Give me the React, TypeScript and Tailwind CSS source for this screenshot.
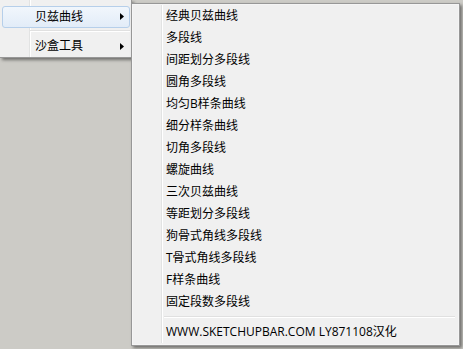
import type { ReactNode } from "react";

const SUB_ITEMS = [
  "经典贝兹曲线",
  "多段线",
  "间距划分多段线",
  "圆角多段线",
  "均匀B样条曲线",
  "细分样条曲线",
  "切角多段线",
  "螺旋曲线",
  "三次贝兹曲线",
  "等距划分多段线",
  "狗骨式角线多段线",
  "T骨式角线多段线",
  "F样条曲线",
  "固定段数多段线",
];

const FONT = { fontFamily: '"Open Sans", "Noto Sans CJK SC", sans-serif' };

function Arrow() {
  return (
    <svg width="4" height="7" viewBox="0 0 4 7" className="shrink-0">
      <polygon points="0,0 4,3.5 0,7" fill="#000" />
    </svg>
  );
}

function Separator({ className = "" }: { className?: string }) {
  return (
    <div className={`flex h-[8px] flex-col justify-center ${className}`}>
      <div className="h-px bg-[#e0e0e0]" />
      <div className="h-px bg-white" />
    </div>
  );
}

function Gutter({ w }: { w: string }) {
  return (
    <div className={`flex shrink-0 justify-end ${w}`}>
      <div className="w-px bg-[#e2e3e3]" />
      <div className="w-px bg-white" />
    </div>
  );
}

function MainItem({ label, active }: { label: string; active?: boolean }) {
  return (
    <div
      className={`flex h-[22px] items-center rounded-[3px] border pr-[5px] ${
        active
          ? "border-[#b6cfea] bg-gradient-to-b from-[#f1f6fc] to-[#e2ecf8]"
          : "border-transparent"
      }`}
    >
      <span className="flex-1 pl-[32px] text-[12px] leading-none text-black">{label}</span>
      <Arrow />
    </div>
  );
}

function Menu({ children, className }: { children: ReactNode; className: string }) {
  return (
    <div
      className={`absolute bg-[#f0f0f0] shadow-[2px_2px_3px_rgba(0,0,0,0.45)] ${className}`}
      style={FONT}
    >
      {children}
    </div>
  );
}

export default function App() {
  return (
    <div className="relative h-[349px] w-[463px] overflow-hidden bg-[#cccbc6]">
      {/* parent menu, top edge scrolled off */}
      <Menu className="left-0 top-0 h-[58px] w-[132px] border-b border-r border-[#979797]">
        <div className="relative flex h-full">
          <div className="absolute inset-y-0 left-0 flex">
            <Gutter w="w-[31px]" />
          </div>
          <div className="relative flex flex-1 flex-col pl-[2px] pr-[1px] pt-[6px]">
            <MainItem label="贝兹曲线" active />
            <Separator className="ml-[28px]" />
            <MainItem label="沙盒工具" />
          </div>
        </div>
      </Menu>

      {/* submenu */}
      <Menu className="left-[131px] top-[3px] h-[343px] w-[329px] border border-[#979797]">
        <div className="flex h-full border border-[#f5f5f5] pb-[1px]">
          <div className="relative flex flex-1">
            <div className="absolute inset-y-0 left-0 flex">
              <Gutter w="w-[30px]" />
            </div>
            <div className="relative flex flex-1 flex-col">
              {SUB_ITEMS.map((t) => (
                <div key={t} className="flex h-[22px] items-center pl-[33px]">
                  <span className="text-[12px] leading-none text-black">{t}</span>
                </div>
              ))}
              <Separator className="ml-[31px] mr-[3px]" />
              <div className="flex h-[22px] items-center pl-[33px]">
                <span className="text-[12px] leading-none text-black">
                  WWW.SKETCHUPBAR.COM LY871108汉化
                </span>
              </div>
            </div>
          </div>
        </div>
      </Menu>
    </div>
  );
}
